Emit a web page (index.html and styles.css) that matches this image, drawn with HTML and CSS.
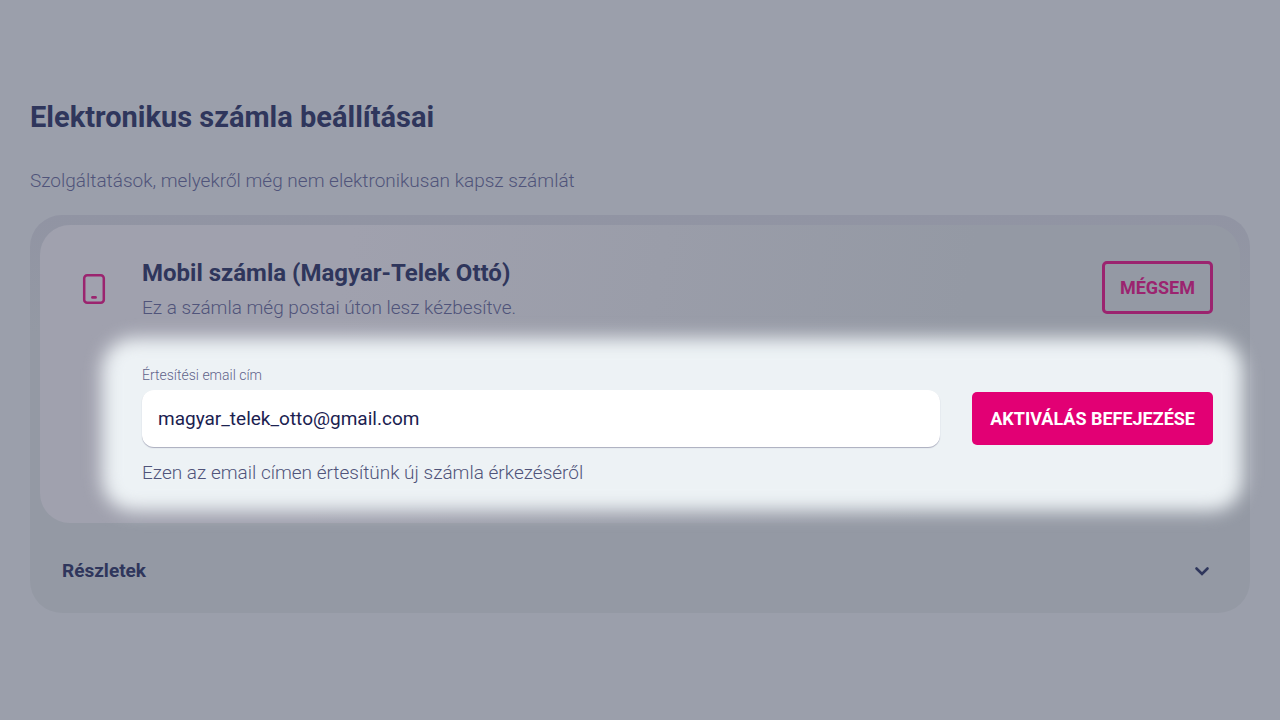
FILE: index.html
```html
<!DOCTYPE html>
<html lang="hu">
<head>
    <meta charset="UTF-8">
    <meta name="viewport" content="width=device-width, initial-scale=1.0">
    <title>Elektronikus számla beállításai</title>
    <link rel="stylesheet" href="styles.css">
</head>
<body>
    <main class="page">
        <h1 class="title">Elektronikus számla beállításai</h1>
        <p class="intro">Szolgáltatások, melyekről még nem elektronikusan kapsz számlát</p>

        <section class="panel">
            <div class="card">
                <svg class="phone" viewBox="0 0 24 32" fill="none" aria-hidden="true">
                    <rect x="2.2" y="2.2" width="19.6" height="27.6" rx="3" stroke="currentColor" stroke-width="2.5"/>
                    <path d="M10.4 24.4h3.200" stroke="currentColor" stroke-width="2.600" stroke-linecap="round"/>
                </svg>
                <div class="bill">
                    <div class="bill-head">
                        <div class="bill-text">
                            <h2 class="bill-name">Mobil számla (Magyar-Telek Ottó)</h2>
                            <p class="bill-info">Ez a számla még postai úton lesz kézbesítve.</p>
                        </div>
                        <button class="btn btn-outline" type="button">MÉGSEM</button>
                    </div>
                    <form class="activate">
                        <label class="label" for="email">Értesítési email cím</label>
                        <input class="input" type="email" id="email" value="magyar_telek_otto@gmail.com" aria-describedby="email-help">
                        <button class="btn btn-primary" type="submit">AKTIVÁLÁS BEFEJEZÉSE</button>
                        <p class="help" id="email-help">Ezen az email címen értesítünk új számla érkezéséről</p>
                    </form>
                </div>
            </div>
            <button class="details" type="button">
                <span>Részletek</span>
                <svg class="chevron" viewBox="0 0 16 16" fill="none" aria-hidden="true">
                    <path d="M2.5 5.5L8 11l5.500-5.500" stroke="currentColor" stroke-width="2.600" stroke-linecap="round"/>
                </svg>
            </button>
        </section>
    </main>
</body>
</html>
```

FILE: styles.css
```css
* {
    box-sizing: border-box;
    margin: 0;
    padding: 0;
}
body {
    min-height: 100vh;
    background-color: #9b9fab;
    color: #2f365c;
    font-family: Roboto, "Liberation Sans", sans-serif;
    font-size: 19px;
    line-height: 24px;
}
button, input {
    font: inherit;
}
.page {
    padding: 99px 30px;
}
.title {
    font-size: 29px;
    line-height: 36px;
    font-weight: 700;
}
.intro {
    margin-top: 34px;
    color: #50547a;
    font-weight: 300;
}
.panel {
    margin-top: 22px;
    padding: 10px;
    border-radius: 32px;
    background: linear-gradient(#9194a3, #9499a4 30%);
}
.card {
    display: flex;
    align-items: flex-start;
    gap: 36px;
    padding: 36px 27px 38px 42px;
    border-radius: 30px;
    background: linear-gradient(100deg, #a0a1ae 25%, #9499a4 75%);
}
.phone {
    flex: none;
    width: 24px;
    height: 32px;
    margin-top: 12px;
    color: #9b246f;
}
.bill {
    flex: 1;
}
.bill-head {
    display: flex;
    justify-content: space-between;
    align-items: flex-start;
}
.bill-name {
    font-size: 24px;
    line-height: 24px;
    font-weight: 700;
}
.bill-info {
    margin-top: 11px;
    color: #50547a;
    font-weight: 300;
}
.btn {
    height: 53px;
    padding: 0 18px;
    border: none;
    border-radius: 5px;
    font-size: 18px;
    font-weight: 700;
    cursor: pointer;
}
.btn-outline {
    padding: 0 15px;
    border: 3px solid #9b246f;
    background: none;
    color: #9b246f;
}
.btn-primary {
    background-color: #e20074;
    color: #fff;
}
/* lit area behind the form */
.activate {
    position: relative;
    z-index: 0;
    display: grid;
    grid-template-columns: 1fr auto;
    column-gap: 32px;
    align-items: center;
    margin-top: 44px;
}
.activate::before {
    content: "";
    position: absolute;
    z-index: -1;
    inset: -26px -30px -26px -40px;
    border-radius: 32px;
    background-color: #edf2f5;
    filter: blur(9px);
}
.label {
    grid-column: 1 / -1;
    margin-bottom: 4px;
    color: #5f638a;
    font-size: 14px;
    line-height: 22px;
    font-weight: 300;
}
.input {
    width: 100%;
    height: 57px;
    padding: 0 16px;
    border: none;
    border-radius: 12px;
    background-color: #fff;
    box-shadow: 0 1px 1px #a9acbd;
    color: #1b2150;
}
.help {
    grid-column: 1 / -1;
    margin-top: 14px;
    color: #50547a;
    font-weight: 300;
}
.details {
    display: flex;
    justify-content: space-between;
    align-items: center;
    width: 100%;
    padding: 36px 30px 20px 22px;
    border: none;
    background: none;
    color: #2f365c;
    font-weight: 700;
    cursor: pointer;
}
.chevron {
    width: 16px;
    height: 16px;
}
```
